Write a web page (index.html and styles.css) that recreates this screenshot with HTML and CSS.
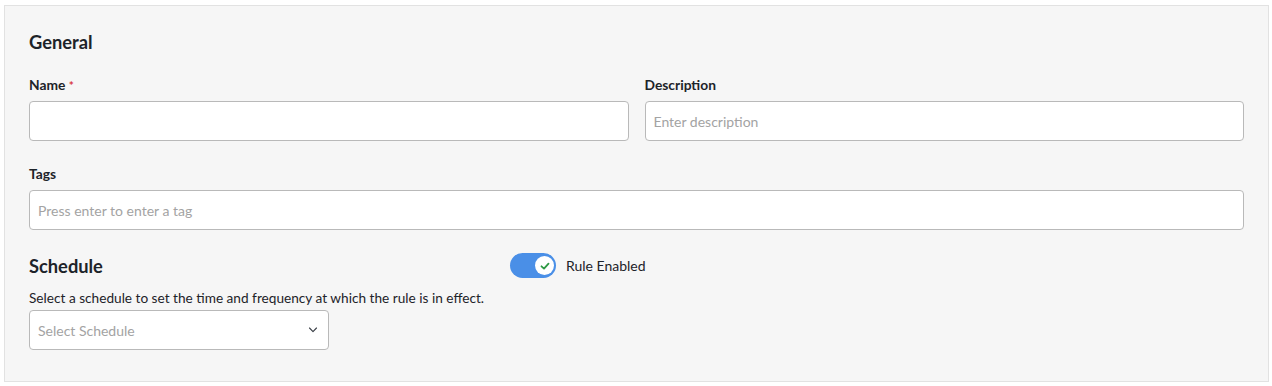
FILE: index.html
```html
<!DOCTYPE html>
<html lang="en">
  <head>
    <meta charset="UTF-8" />
    <meta name="viewport" content="width=device-width, initial-scale=1.0" />
    <title>Rule</title>
    <link rel="stylesheet" href="styles.css">
  </head>
  <body>
    <div class="panel">
      <h2 class="section-title">General</h2>

      <div class="row two">
        <div class="field">
          <label class="label">Name <span class="req">*</span></label>
          <input class="input" type="text" />
        </div>
        <div class="field">
          <label class="label">Description</label>
          <input class="input" type="text" placeholder="Enter description" />
        </div>
      </div>

      <div class="row">
        <div class="field">
          <label class="label">Tags</label>
          <input class="input" type="text" placeholder="Press enter to enter a tag" />
        </div>
      </div>

      <div class="schedule-head">
        <h2 class="section-title">Schedule</h2>
        <div class="toggle-wrap">
          <span class="toggle">
            <span class="knob">
              <svg width="12" height="12" viewBox="0 0 12 12">
                <path d="M2.5 6.3 L5 8.6 L9.5 3.6" fill="none" stroke="#2f9a45" stroke-width="1.8" stroke-linecap="round" stroke-linejoin="round" />
              </svg>
            </span>
          </span>
          <span class="toggle-text">Rule Enabled</span>
        </div>
      </div>
      <p class="hint">Select a schedule to set the time and frequency at which the rule is in effect.</p>
      <div class="select">
        <span class="select-ph">Select Schedule</span>
        <svg width="10" height="6" viewBox="0 0 10 6">
          <path d="M1.5 1 L5 4.6 L8.5 1" fill="none" stroke="#3a3f47" stroke-width="1.1" stroke-linecap="round" stroke-linejoin="round" />
        </svg>
      </div>
    </div>
  </body>
</html>
```

FILE: styles.css
```css
body {
  margin: 0;
  background: #ffffff;
  font-family: Lato, "Noto Sans", sans-serif;
  color: #1d2329;
}

.panel {
  margin: 5px 3px 0 4px;
  padding: 24px 24px 32px 24px;
  height: 377px;
  box-sizing: border-box;
  background: #f6f6f6;
  border: 1px solid #e2e2e2;
}

.section-title {
  margin: 0;
  font-size: 18.3px;
  line-height: 24px;
  font-weight: 700;
  color: #1d2329;
}

.row {
  margin-top: 22px;
}

.row + .row {
  margin-top: 24px;
}

.two {
  display: grid;
  grid-template-columns: 1fr 1fr;
  column-gap: 16px;
}

.field {
  display: flex;
  flex-direction: column;
}

.label {
  font-size: 13.8px;
  line-height: 18px;
  font-weight: 700;
  margin-bottom: 7px;
  color: #1d2329;
}

.req {
  color: #d9363e;
  font-size: 12px;
  line-height: 0;
}

.input {
  height: 40px;
  box-sizing: border-box;
  border: 1px solid #b9b9b9;
  border-radius: 4px;
  background: #fff;
  padding: 0 8px;
  font-family: Lato, "Noto Sans", sans-serif;
  font-size: 14px;
  outline: none;
}

.input::placeholder {
  color: #a3a3a3;
}

.schedule-head {
  margin-top: 23px;
  display: flex;
  align-items: center;
}

.schedule-head .section-title {
  width: 481px;
}

.toggle-wrap {
  display: flex;
  align-items: center;
  gap: 10px;
}

.toggle {
  width: 46px;
  height: 25px;
  border-radius: 13px;
  background: #4a8fe7;
  display: flex;
  align-items: center;
  justify-content: flex-end;
  padding: 0 2px;
  box-sizing: border-box;
}

.knob {
  width: 19px;
  height: 19px;
  border-radius: 50%;
  background: #fff;
  display: flex;
  align-items: center;
  justify-content: center;
}

.toggle-text {
  font-size: 14px;
  color: #1d2329;
}

.hint {
  margin: 10px 0 2px 0;
  font-size: 13.65px;
  line-height: 20px;
  color: #1d2329;
}

.select {
  width: 300px;
  height: 40px;
  box-sizing: border-box;
  border: 1px solid #b9b9b9;
  border-radius: 4px;
  background: #fff;
  padding: 0 10px 0 8px;
  display: flex;
  align-items: center;
  justify-content: space-between;
}

.select-ph {
  font-size: 14px;
  color: #a3a3a3;
}
```
